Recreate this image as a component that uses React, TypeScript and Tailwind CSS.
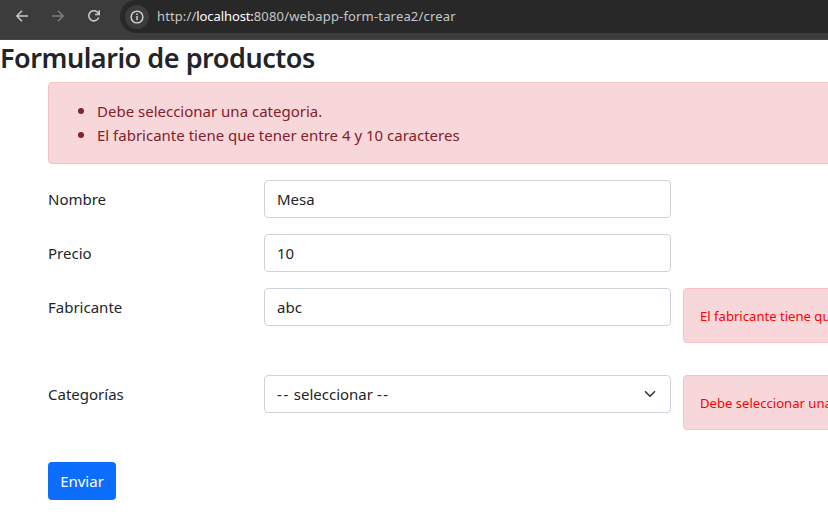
import React from "react";

type FieldProps = { label: string; value: React.ReactNode; select?: boolean; error?: string };

function Field({ label, value, select, error }: FieldProps) {
  return (
    <div className={`flex items-start ${error ? "h-[87px]" : "h-[54px]"}`}>
      <label className="w-[216px] shrink-0 pt-[7px] leading-6">{label}</label>
      <div className="flex h-[38px] w-[407px] shrink-0 items-center justify-between rounded-[4px] border border-[#ced4da] bg-white px-3 leading-6">
        <span>{value}</span>
        {select && (
          <svg className="mr-0.5 h-3 w-3" viewBox="0 0 16 16" fill="none" stroke="#343a40" strokeWidth="2.2" strokeLinecap="round" strokeLinejoin="round">
            <path d="m2 5 6 6 6-6" />
          </svg>
        )}
      </div>
      {error && (
        <div className="ml-3 h-[55px] w-[400px] shrink-0 rounded-[4px] border border-[#f5c2c7] bg-[#f8d7da] px-4 pt-[17px] text-[13.1px] leading-[21px] whitespace-nowrap text-[#ff0000]">
          {error}
        </div>
      )}
    </div>
  );
}

export default function App() {
  return (
    <div className="h-[527px] w-[828px] overflow-hidden bg-white font-['Noto_Sans',sans-serif] text-[15px] text-[#212529]">
      <header className="flex h-10 items-start border-b border-[#474747] bg-[#3c3c3c] text-[#c7c7c7]">
        <div className="flex h-8 w-[120px] shrink-0 items-center gap-6 pl-4">
          <svg className="size-3" viewBox="0 0 12 12" fill="none" stroke="#c7c7c7" strokeWidth="1.5">
            <path d="M12 6H1M6 .8.9 6 6 11.2" />
          </svg>
          <svg className="size-3" viewBox="0 0 12 12" fill="none" stroke="#7d7d7d" strokeWidth="1.5">
            <path d="M0 6h11M6 .8 11.1 6 6 11.2" />
          </svg>
          <svg className="size-3" viewBox="0 0 12 12" fill="none" stroke="#c7c7c7" strokeWidth="1.6">
            <path d="M10.7 7.5A5.1 5.1 0 1 1 10.3 3.2L11.2 4.4M11.3.2v4.3H7" />
          </svg>
        </div>
        <div className="flex h-[33px] grow items-center rounded-l-full bg-[#282828] pl-[5px]">
          <span className="flex size-6 items-center justify-center rounded-full bg-[#3c3c3c]">
            <svg className="size-[14px]" viewBox="0 0 14 14" fill="none" stroke="#d8d8d8" strokeWidth="1.4">
              <circle cx="7" cy="7" r="5.9" />
              <path d="M7 6v4.2M7 3.6v1.5" />
            </svg>
          </span>
          <span className="ml-2 text-[13px] tracking-[0.11px] whitespace-nowrap">
            http://<span className="tracking-[-0.1px] text-white">localhost:</span><span className="tracking-[0.17px]">8080/webapp-form-tarea2/crear</span>
          </span>
        </div>
      </header>
      <h1 className="h-[42px] text-[27px] leading-9 font-semibold tracking-[-0.47px]">Formulario de productos</h1>
      <main className="pl-12">
        <ul className="mb-4 h-[82px] w-[900px] list-disc rounded-[4px] border border-[#f5c2c7] bg-[#f8d7da] py-4 pl-12 leading-6 text-[#842029] marker:text-[17px] marker:leading-none">
          <li className="h-6">Debe seleccionar una categoria.</li>
          <li className="h-6">El fabricante tiene que tener entre 4 y 10 caracteres</li>
        </ul>
        <Field label="Nombre" value="Mesa" />
        <Field label="Precio" value="10" />
        <Field label="Fabricante" value="abc" error="El fabricante tiene que tener entre 4 y 10 caracteres" />
        <Field
          label="Categorías"
          value={<><span className="tracking-[1.6px]">--</span> seleccionar <span className="tracking-[1.6px]">--</span></>}
          select
          error="Debe seleccionar una categoria."
        />
        <button className="h-[38px] w-[68px] rounded-[4px] bg-[#0d6efd] text-white">Enviar</button>
      </main>
    </div>
  );
}
